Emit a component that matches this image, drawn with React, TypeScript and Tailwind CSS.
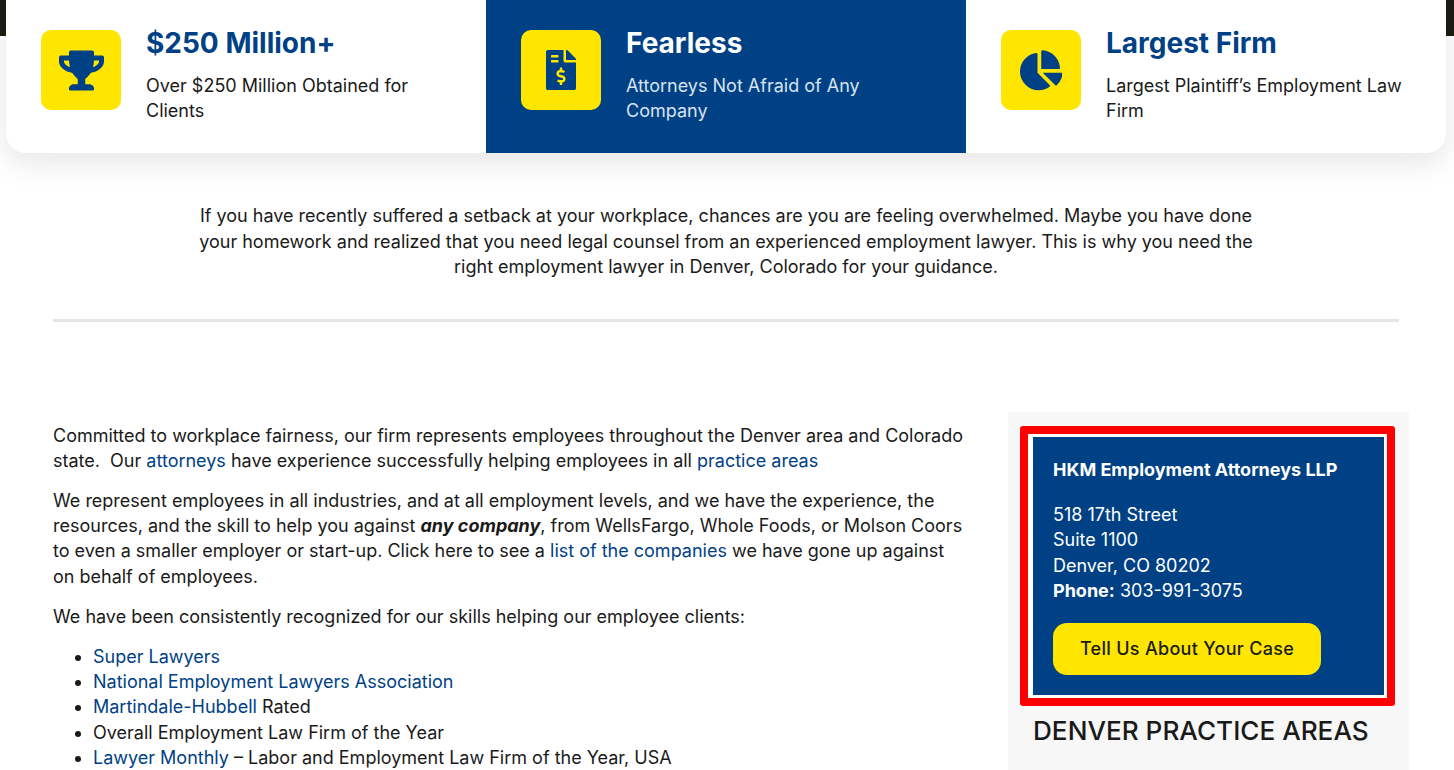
import React from 'react';
import { FaTrophy, FaFileInvoiceDollar, FaChartPie } from 'react-icons/fa';

const BLUE = 'text-[#004185]';

const features = [
  { icon: FaTrophy, size: 'text-[45px]', title: '$250 Million+', text: 'Over $250 Million Obtained for Clients', active: false },
  { icon: FaFileInvoiceDollar, size: 'text-[40px]', title: 'Fearless', text: 'Attorneys Not Afraid of Any Company', active: true },
  { icon: FaChartPie, size: 'text-[42.5px]', title: 'Largest Firm', text: 'Largest Plaintiff’s Employment Law Firm', active: false },
];

const Link: React.FC<{ children: React.ReactNode }> = ({ children }) => (
  <a href="#" className={BLUE}>{children}</a>
);

export default function App() {
  return (
    <div className="h-[770px] overflow-hidden bg-white font-['Inter',sans-serif] text-[18px] leading-[25.2px] text-[#1a1a1a]">
      <div className="h-[36px] bg-[#1c1c12]" />

      {/* Feature cards */}
      <div className="relative mx-[6px] -mt-[36px] grid h-[153px] w-[1440px] grid-cols-3 rounded-b-[20px] bg-white shadow-[0_10px_30px_rgba(0,0,0,0.1)]">
        {features.map((f) => {
          const Icon = f.icon;
          return (
            <div
              key={f.title}
              className={`flex gap-[25px] pl-[35px] pr-[40px] pt-[30px] ${f.active ? 'bg-[#004185]' : ''}`}
            >
              <div className={`flex h-[80px] w-[80px] shrink-0 items-center justify-center rounded-[10px] bg-[#ffe600] ${BLUE} ${f.size}`}>
                <Icon />
              </div>
              <div>
                <h3 className={`text-[28px] font-bold leading-[28px] -mt-[1px] ${f.active ? 'text-white' : BLUE}`}>{f.title}</h3>
                <p className={`mt-[16px] leading-[25px] ${f.active ? 'text-[#d9e3ee]' : ''}`}>{f.text}</p>
              </div>
            </div>
          );
        })}
      </div>

      {/* Intro */}
      <div className="ml-[53px] mr-[55px] mt-[50px] border-b-[3px] border-[#e5e5e5] pb-[39.4px]">
        <p className="mx-auto w-[1070px] text-center leading-[25.5px]">
          If you have recently suffered a setback at your workplace, chances are you are feeling overwhelmed. Maybe you have done your homework and realized that you need legal counsel from an experienced employment lawyer. This is why you need the right employment lawyer in Denver, Colorado for your guidance.
        </p>
      </div>

      <div className="ml-[53px] mr-[45px] mt-[90px] flex justify-between">
        {/* Main copy */}
        <div className="w-[915px] pt-[10.7px]">
          <p>
            Committed to workplace fairness, our firm represents employees throughout the Denver area and Colorado state.&nbsp; Our <Link>attorneys</Link> have experience successfully helping employees in all <Link>practice areas</Link>
          </p>
          <p className="mt-[15px]">
            We represent employees in all industries, and at all employment levels, and we have the experience, the resources, and the skill to help you against <b><i>any company</i></b>, from WellsFargo, Whole Foods, or Molson Coors to even a smaller employer or start-up. Click here to see a <Link>list of the companies</Link> we have gone up against on behalf of employees.
          </p>
          <p className="mt-[15px]">We have been consistently recognized for our skills helping our employee clients:</p>
          <ul className="mt-[15px] list-disc pl-[40px]">
            <li><Link>Super Lawyers</Link></li>
            <li><Link>National Employment Lawyers Association</Link></li>
            <li><Link>Martindale-Hubbell</Link> Rated</li>
            <li>Overall Employment Law Firm of the Year</li>
            <li><Link>Lawyer Monthly</Link> – Labor and Employment Law Firm of the Year, USA</li>
          </ul>
        </div>

        {/* Sidebar */}
        <aside className="h-[400px] w-[401px] bg-[#f7f7f7] pl-[12px] pt-[14px]">
          <div className="w-[375px] rounded-[3px] border-[8px] border-[#ff0000] bg-white py-[3px] pl-[5px] pr-[3px]">
            <div className="h-[258px] bg-[#004185] px-[20px] pt-[20px] text-white">
              <p className="text-[18px] font-bold leading-[25px]">HKM Employment Attorneys LLP</p>
              <p className="mt-[20px] leading-[25.4px]">
                518 17th Street<br />Suite 1100<br />Denver, CO 80202<br /><b className="font-bold">Phone:</b> 303-991-3075
              </p>
              <a href="#" className="mt-[19px] flex h-[52px] w-[268px] items-center justify-center rounded-[14px] bg-[#ffe600] font-medium tracking-[0.3px] text-[#1a1a1a]">
                Tell Us About Your Case
              </a>
            </div>
          </div>
          <h3 className="ml-[13px] mt-[8px] text-[26.15px] font-medium leading-[34px]">DENVER PRACTICE AREAS</h3>
        </aside>
      </div>
    </div>
  );
}
